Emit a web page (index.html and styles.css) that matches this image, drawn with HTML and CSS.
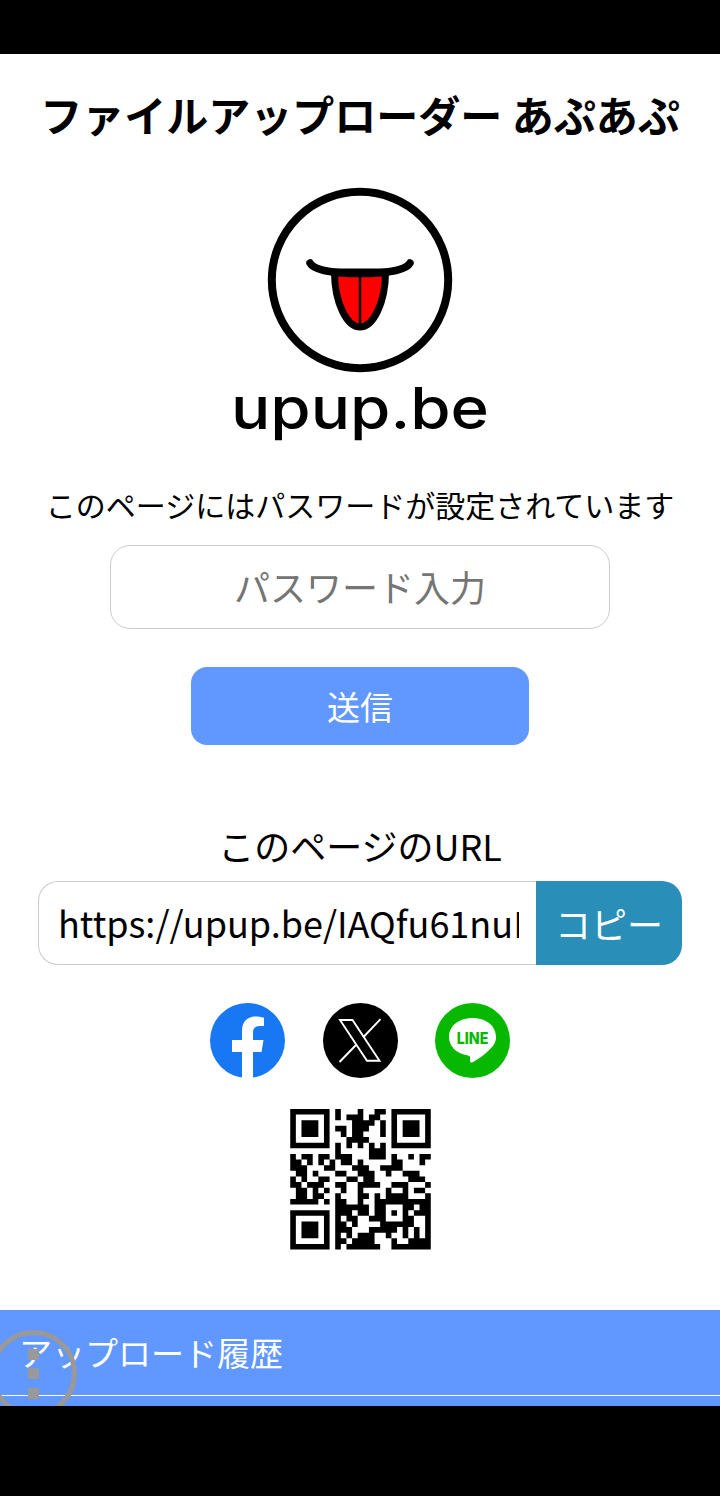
FILE: index.html
```html
<!DOCTYPE html>
<html lang="ja">
<head>
<meta charset="utf-8">
<title>ファイルアップローダー あぷあぷ</title>
<link rel="stylesheet" href="styles.css">
</head>
<body>
<div class="bar-top"></div>
<main class="page">
  <h1 class="title">ファイルアップローダー あぷあぷ</h1>
  <svg class="logo" viewBox="230 187 260 250" aria-label="upup.be">
    <circle cx="360" cy="280" r="88.2" fill="#fff" stroke="#000" stroke-width="8"/>
    <path d="M334.5 272C334.5 303 347 327 360 327C373 327 385.5 303 385.5 272Z" fill="#f00" stroke="#000" stroke-width="7"/>
    <path d="M360 275V325" stroke="#000" stroke-width="2.5" fill="none"/>
    <path d="M310 263C314 271 338 273.5 360 273.5C382 273.5 406 271 410 263" stroke="#000" stroke-width="7.5" stroke-linecap="round" fill="none"/>
    <text class="wordmark" x="231" y="428.5" textLength="258" lengthAdjust="spacingAndGlyphs">upup.be</text>
  </svg>
  <p class="notice">このページにはパスワードが設定されています</p>
  <input class="password" type="text" placeholder="パスワード入力">
  <button class="send" type="button">送信</button>
  <p class="url-label">このページのURL</p>
  <div class="url-row">
    <input class="url" type="text" value="https://upup.be/IAQfu61nuRk">
    <button class="copy" type="button">コピー</button>
  </div>
  <div class="social">
    <svg class="icon" viewBox="0 0 75 75"><circle cx="37.5" cy="37.5" r="37.5" fill="#1877f2"/><path d="M43 75V49H51.5L53.5 37H43V29.5C43 25.5 45 23 49.5 23H54V14.7C51 14 48 13.6 46 13.6C37 13.6 32 19 32 28V37H22V49H32V75Z" fill="#fff"/></svg>
    <svg class="icon" viewBox="0 0 75 75"><circle cx="37.5" cy="37.5" r="37.5" fill="#000"/><path d="M17 17H29.5L56.5 57.8H44ZM57.5 16.2L40.5 34M33.5 41.5L16.5 59" fill="none" stroke="#fff" stroke-width="1.9"/></svg>
    <svg class="icon" viewBox="0 0 75 75"><circle cx="37.5" cy="37.5" r="37.5" fill="#06b900"/><path d="M37.5 15C22.5 15 14 24 14 34C14 43 21 50.5 33 52.5C35 53 35.5 54 35 56C34.8 58 35 60 37 59.5C41 58 52 50 57 44C60 40.5 61 37.5 61 34C61 24 52.5 15 37.5 15Z" fill="#fff"/><text class="line-text" x="21.7" y="41" textLength="31.6" lengthAdjust="spacingAndGlyphs">LINE</text></svg>
  </div>
  <svg class="qr" viewBox="0 0 25 25" aria-label="QR">
    <path d="M0 0h7v7h-7zM1 1v5h5v-5zM2 2h3v3h-3zM18 0h7v7h-7zM19 1v5h5v-5zM20 2h3v3h-3zM0 18h7v7h-7zM1 19v5h5v-5zM2 20h3v3h-3z" fill-rule="evenodd"/>
    <path fill="none" stroke="#000" stroke-width="1" d="M8 .5h1M12 .5h1M15 .5h2M8 1.5h1M10 1.5h3M14 1.5h2M11 2.5h4M16 2.5h1M8 3.5h2M11 3.5h3M16 3.5h1M9 4.5h1M11 4.5h2M16 4.5h1M10 5.5h4M8 6.5h1M10 6.5h1M12 6.5h1M14 6.5h1M16 6.5h1M8 7.5h1M14 7.5h3M0 8.5h1M2 8.5h2M5 8.5h2M8 8.5h3M14 8.5h3M18 8.5h1M21 8.5h1M23 8.5h2M0 9.5h2M3 9.5h1M5 9.5h1M7 9.5h1M9 9.5h2M12 9.5h1M18 9.5h2M23 9.5h1M0 10.5h3M6 10.5h2M11 10.5h3M16 10.5h4M1 11.5h2M4 11.5h1M8 11.5h2M12 11.5h3M17 11.5h1M20 11.5h3M0 12.5h1M2 12.5h1M5 12.5h2M10 12.5h2M13 12.5h2M21 12.5h3M0 13.5h2M3 13.5h3M8 13.5h2M12 13.5h4M18 13.5h3M24 13.5h1M1 14.5h2M4 14.5h1M6 14.5h1M9 14.5h1M12 14.5h1M17 14.5h1M20 14.5h1M22 14.5h2M1 15.5h2M4 15.5h2M8 15.5h1M12 15.5h2M15 15.5h1M17 15.5h4M24 15.5h1M0 16.5h5M6 16.5h1M8 16.5h2M12 16.5h1M15 16.5h10M8 17.5h6M15 17.5h2M20 17.5h2M23 17.5h2M8 18.5h3M12 18.5h2M15 18.5h2M18 18.5h1M20 18.5h1M22 18.5h3M8 19.5h1M10 19.5h2M14 19.5h3M20 19.5h2M24 19.5h1M8 20.5h2M11 20.5h1M16 20.5h6M24 20.5h1M8 21.5h3M14 21.5h5M20 21.5h1M22 21.5h1M24 21.5h1M8 22.5h1M10 22.5h1M12 22.5h3M17 22.5h1M20 22.5h1M22 22.5h1M24 22.5h1M8 23.5h2M11 23.5h4M18 23.5h1M21 23.5h4M8 24.5h1M10 24.5h6M18 24.5h7"/>
  </svg>
  <section class="history">
    <h2 class="history-title">アップロード履歴</h2>
  </section>
  <button class="menu" type="button" aria-label="menu"><span class="dot"></span><span class="dot"></span><span class="dot"></span></button>
</main>
<div class="bar-bottom"></div>
</body>
</html>
```
FILE: styles.css
```css
* { box-sizing: border-box; }
html, body { margin: 0; padding: 0; }
body {
  width: 720px;
  height: 1496px;
  background: #000;
  overflow: hidden;
  font-family: "Noto Sans CJK JP", "Noto Sans", sans-serif;
  color: #000;
  display: flex;
  flex-direction: column;
}
.bar-top { height: 54px; flex: none; }
.bar-bottom { height: 90px; flex: none; }
.page {
  position: relative;
  height: 1352px;
  flex: none;
  background: #fff;
  overflow: hidden;
  display: flex;
  flex-direction: column;
  align-items: center;
}
.title {
  margin: 30px 0 0;
  font-size: 42px;
  line-height: 60px;
  font-weight: 700;
  white-space: nowrap;
}
.logo {
  display: block;
  width: 260px;
  height: 250px;
  margin-top: 43px;
  overflow: visible;
}
.wordmark {
  font-family: Inter, sans-serif;
  font-size: 58px;
  font-weight: 500;
}
.line-text {
  font-family: Inter, sans-serif;
  font-size: 15.5px;
  font-weight: 800;
  fill: #06b900;
}
.notice {
  margin: 46px 0 0;
  font-size: 30px;
  line-height: 42px;
  white-space: nowrap;
}
.password {
  display: block;
  width: 500px;
  height: 84px;
  margin-top: 20px;
  padding: 0 20px 2px;
  border: 1px solid #ccc;
  border-radius: 20px;
  background: #fff;
  font-family: inherit;
  font-size: 36px;
  text-align: center;
  outline: none;
}
.send {
  display: block;
  width: 338px;
  height: 79px;
  margin-top: 38px;
  border: 0;
  border-radius: 16px;
  background: #6198ff;
  color: #fff;
  font-family: inherit;
  font-size: 33px;
  padding: 0;
}
.url-label {
  margin: 77px 0 0;
  font-size: 36px;
  line-height: 46px;
  white-space: nowrap;
}
.url-row {
  display: flex;
  width: 644px;
  height: 84px;
  margin-top: 13px;
}
.url {
  flex: none;
  width: 498px;
  height: 84px;
  padding: 0 17px 3px 19px;
  border: 1px solid #ccc;
  border-right: 0;
  border-radius: 20px 0 0 20px;
  background: #fff;
  font-family: inherit;
  font-size: 36px;
  color: #000;
  outline: none;
}
.copy {
  flex: none;
  width: 146px;
  height: 84px;
  padding: 0;
  border: 0;
  border-radius: 0 20px 20px 0;
  background: #298eb8;
  color: #fff;
  font-family: inherit;
  font-size: 36px;
}
.social {
  display: flex;
  gap: 37.5px;
  margin-top: 38px;
}
.icon {
  display: block;
  width: 75px;
  height: 75px;
}
.qr {
  display: block;
  width: 141px;
  height: 141px;
  margin-top: 31px;
}
.history {
  align-self: stretch;
  height: 96px;
  margin-top: 60px;
  padding: 0 0 10px;
  background: #6198ff;
  color: #fff;
}
.history-title {
  margin: 0;
  height: 86px;
  padding-left: 19px;
  border-bottom: 1px solid #fff;
  font-size: 33px;
  font-weight: 400;
  line-height: 84px;
}
.menu {
  position: absolute;
  left: -10px;
  top: 1276px;
  width: 87px;
  height: 87px;
  padding: 0;
  border: 5px solid #999;
  border-radius: 50%;
  background: transparent;
  display: flex;
  flex-direction: column;
  align-items: center;
  justify-content: center;
  gap: 8.5px;
}
.dot {
  display: block;
  width: 11px;
  height: 11px;
  background: #999;
}
```
